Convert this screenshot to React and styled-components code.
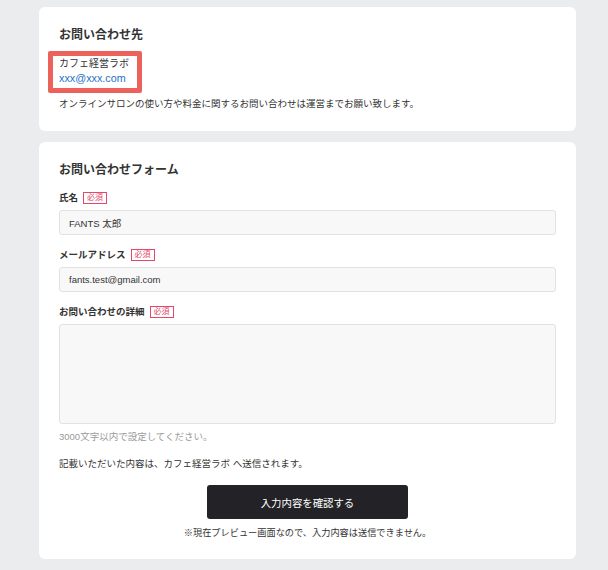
import React from "react";
import styled, { createGlobalStyle } from "styled-components";

const GlobalStyle = createGlobalStyle`
  body {
    margin: 0;
    background: #ebecee;
    font-family: "Liberation Sans", "Noto Sans CJK JP", sans-serif;
    color: #333333;
  }
`;

const Page = styled.div`
  display: flex;
  flex-direction: column;
  gap: 11px;
  width: 537px;
  padding: 7px 0 11px 39px;
`;

const Card = styled.section`
  background: #ffffff;
  border-radius: 6px;
  padding: 20px 20px ${(p) => p.bottom || "20px"};
  display: flex;
  flex-direction: column;
`;

const Title = styled.h2`
  margin: 0;
  font-size: 12px;
  line-height: 16px;
  font-weight: bold;
  color: #333333;
`;

const Highlight = styled.div`
  box-sizing: border-box;
  width: 94px;
  margin: 8px 0 0 -11px;
  padding: 0 6px 2px 6px;
  border: 5px solid #ec625b;
  border-radius: 2px;
  display: flex;
  flex-direction: column;
`;

const Company = styled.span`
  font-size: 10px;
  line-height: 15px;
  color: #333333;
  white-space: nowrap;
`;

const Mail = styled.a`
  font-size: 10.8px;
  line-height: 15px;
  color: #1f72c9;
  text-decoration: none;
  white-space: nowrap;
`;

const Text = styled.p`
  margin: ${(p) => p.mt || "0"} 0 0;
  font-size: ${(p) => p.size || "9.5px"};
  line-height: 14px;
  color: ${(p) => p.color || "#333333"};
  text-align: ${(p) => p.align || "left"};
  white-space: nowrap;
`;

const Field = styled.div`
  display: flex;
  flex-direction: column;
  gap: 4px;
  margin-top: 12px;
`;

const Label = styled.label`
  display: flex;
  align-items: center;
  gap: 5px;
  font-size: 9.5px;
  line-height: 16px;
  font-weight: bold;
  color: #333333;
`;

const Required = styled.span`
  font-size: 8px;
  line-height: 10px;
  font-weight: normal;
  color: #e2486a;
  border: 1px solid #e2486a;
  padding: 0 3px;
`;

const Input = styled.input`
  box-sizing: border-box;
  width: 100%;
  height: 25px;
  margin: 0;
  padding: 0 9px;
  border: 1px solid #e2e2e2;
  border-radius: 3px;
  background: #f8f8f8;
  font-family: "Liberation Sans", "Noto Sans CJK JP", sans-serif;
  font-size: 9.5px;
  color: #333333;
  outline: none;
`;

const TextArea = styled.textarea`
  box-sizing: border-box;
  display: block;
  width: 100%;
  height: 100px;
  margin: 0;
  padding: 8px 9px;
  border: 1px solid #e2e2e2;
  border-radius: 3px;
  background: #f8f8f8;
  font-family: "Liberation Sans", "Noto Sans CJK JP", sans-serif;
  font-size: 9.5px;
  resize: none;
  outline: none;
`;

const Actions = styled.div`
  display: flex;
  flex-direction: column;
  align-items: center;
  margin-top: 14px;
`;

const Submit = styled.button`
  width: 201px;
  height: 34px;
  border: none;
  border-radius: 3px;
  background: #232327;
  color: #ffffff;
  font-family: "Liberation Sans", "Noto Sans CJK JP", sans-serif;
  font-size: 10.4px;
  cursor: pointer;
`;

const App = () => (
  <>
    <GlobalStyle />
    <Page>
      <Card>
        <Title>お問い合わせ先</Title>
        <Highlight>
          <Company>カフェ経営ラボ</Company>
          <Mail href="#">xxx@xxx.com</Mail>
        </Highlight>
        <Text mt="4px">
          オンラインサロンの使い方や料金に関するお問い合わせは運営までお願い致します。
        </Text>
      </Card>

      <Card bottom="19px">
        <Title>お問い合わせフォーム</Title>
        <Field>
          <Label>
            氏名<Required>必須</Required>
          </Label>
          <Input defaultValue="FANTS 太郎" />
        </Field>
        <Field>
          <Label>
            メールアドレス<Required>必須</Required>
          </Label>
          <Input defaultValue="fants.test@gmail.com" />
        </Field>
        <Field>
          <Label>
            お問い合わせの詳細<Required>必須</Required>
          </Label>
          <TextArea />
        </Field>
        <Text mt="6px" color="#9a9a9a">3000文字以内で設定してください。</Text>
        <Text mt="13px">記載いただいた内容は、カフェ経営ラボ へ送信されます。</Text>
        <Actions>
          <Submit>入力内容を確認する</Submit>
          <Text mt="7px" size="9.2px" align="center">
            ※現在プレビュー画面なので、入力内容は送信できません。
          </Text>
        </Actions>
      </Card>
    </Page>
  </>
);

export default App;
